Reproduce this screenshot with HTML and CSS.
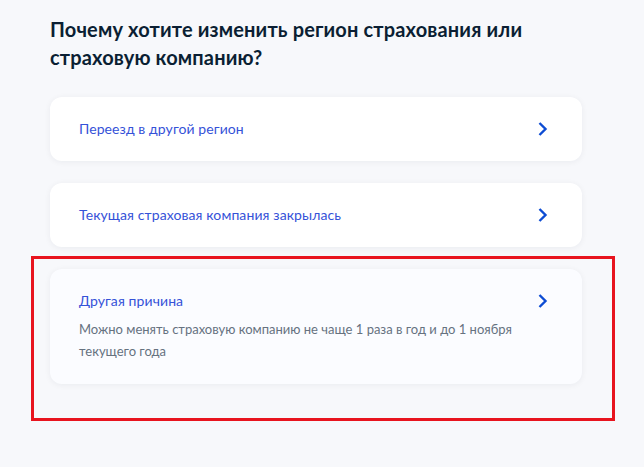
FILE: index.html
```html
<!DOCTYPE html>
<html lang="ru">
<head>
  <meta charset="UTF-8" />
  <meta name="viewport" content="width=device-width, initial-scale=1.0"/>
  <title>Смена страховой компании</title>
  <link rel="stylesheet" href="styles.css">
</head>
<body>
  <div class="page">
    <h1 class="question">Почему хотите изменить регион страхования или страховую компанию?</h1>

    <div class="options">
      <a class="option" href="#">
        <div class="option-head">
          <span class="option-title">Переезд в другой регион</span>
          <svg class="chevron" width="24" height="24" viewBox="0 0 24 24"><path d="M9.5 6l6 6-6 6" /></svg>
        </div>
      </a>

      <a class="option" href="#">
        <div class="option-head">
          <span class="option-title">Текущая страховая компания закрылась</span>
          <svg class="chevron" width="24" height="24" viewBox="0 0 24 24"><path d="M9.5 6l6 6-6 6" /></svg>
        </div>
      </a>

      <a class="option option-active" href="#">
        <div class="option-head">
          <span class="option-title">Другая причина</span>
          <svg class="chevron" width="24" height="24" viewBox="0 0 24 24"><path d="M9.5 6l6 6-6 6" /></svg>
        </div>
        <p class="option-text">Можно менять страховую компанию не чаще 1 раза в год и до 1 ноября текущего года</p>
      </a>
    </div>
  </div>

  <!-- highlight frame -->
  <div class="highlight"></div>
</body>
</html>
```

FILE: styles.css
```css
body {
  margin: 0;
  font-family: Lato, 'Noto Sans', sans-serif;
  background-color: #f7f8fb;
  height: 467px;
  overflow: hidden;
}
.page {
  width: 532px;
  padding: 15px 0 0 50px;
}
.question {
  margin: 0 0 26px;
  font-size: 20px;
  line-height: 28px;
  font-weight: 700;
  letter-spacing: 0.15px;
  color: #0b1f33;
}
.options {
  display: flex;
  flex-direction: column;
  gap: 22px;
}
.option {
  display: block;
  background-color: #ffffff;
  border-radius: 12px;
  padding: 22px 28px 22px 29px;
  text-decoration: none;
  box-shadow: 0 1px 6px rgba(11, 31, 51, 0.06);
}
.option-active {
  background-color: #fbfcff;
}
.option-head {
  display: flex;
  align-items: center;
  justify-content: space-between;
  height: 20px;
}
.option-title {
  font-size: 14px;
  line-height: 20px;
  letter-spacing: 0.1px;
  color: #3552d8;
}
.chevron {
  flex-shrink: 0;
}
.chevron path {
  fill: none;
  stroke: #0d4cd3;
  stroke-width: 2.4;
}
.option-text {
  margin: 7px 0 0;
  padding-right: 40px;
  font-size: 13px;
  line-height: 22px;
  color: #66727f;
}
.highlight {
  position: absolute;
  left: 31px;
  top: 256px;
  width: 578px;
  height: 159px;
  border: 3px solid #e8141e;
  pointer-events: none;
}
```
